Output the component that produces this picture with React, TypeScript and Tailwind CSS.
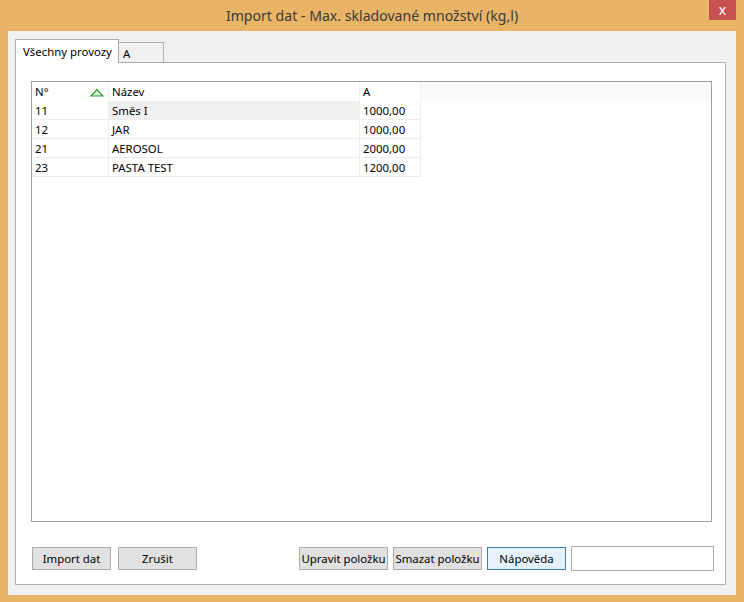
import React from "react";

type Row = { id: string; name: string; a: string };

const rows: Row[] = [
  { id: "11", name: "Směs I", a: "1000,00" },
  { id: "12", name: "JAR", a: "1000,00" },
  { id: "21", name: "AEROSOL", a: "2000,00" },
  { id: "23", name: "PASTA TEST", a: "1200,00" },
];

function SortArrow() {
  return (
    <svg width="14" height="9" viewBox="0 0 14 9">
      <path d="M1 8 L7 1.5 L13 8 Z" fill="#d2f5cf" stroke="#2f9a3a" strokeWidth="1.2" />
    </svg>
  );
}

function Btn({ label, w, focus }: { label: string; w: string; focus?: boolean }) {
  return (
    <button
      type="button"
      className={`h-[23px] ${w} whitespace-nowrap border px-0 text-[11.4px] text-black ${
        focus ? "border-[#3c7fb1] bg-[#e5f1fb]" : "border-[#adadad] bg-[#e1e1e1]"
      }`}
    >
      {label}
    </button>
  );
}

export default function App() {
  return (
    <div
      className="relative flex h-[602px] w-[744px] flex-col bg-[#eab466] text-[11.4px] text-black"
      style={{ fontFamily: '"Noto Sans", "Open Sans", sans-serif' }}
    >
      {/* title bar */}
      <div className="flex h-[31px] shrink-0 items-center justify-center text-[14.1px] text-[#3a3a3a]">
        Import dat - Max. skladované množství (kg,l)
      </div>
      <div className="absolute right-[8px] top-0 flex h-[20px] w-[27px] items-center justify-center bg-[#c75050] pb-[2px] text-[14px] text-white">
        x
      </div>

      {/* client area */}
      <div className="mx-[8px] flex h-[564px] flex-col bg-[#f0f0f0] pl-[7px] pr-[10px] pt-[8px]">
        {/* tabs */}
        <div className="flex h-[23px] items-end">
          <div className="relative z-10 -mb-px flex h-[24px] w-[104px] items-center border border-b-0 border-[#adadad] bg-white pl-[7px]">
            Všechny provozy
          </div>
          <div className="flex h-[20px] w-[45px] items-center border border-b-0 border-l-0 border-[#adadad] bg-[#f0f0f0] pl-[4px] pt-[2px]">
            A
          </div>
        </div>

        {/* tab page */}
        <div className="flex h-[523px] flex-col border border-[#adadad] bg-white pl-[15px] pr-[13px] pt-[18px]">
          <div className="h-[441px] border border-[#a0a0a0] bg-white">
            <div className="flex h-[19px] bg-[#f9f9f9]">
              <div className="flex w-[76px] items-center justify-between bg-white pl-[3px] pr-[4px] pt-[1px]">
                <span>N°</span>
                <SortArrow />
              </div>
              <div className="flex w-[251px] items-center border-l border-[#f0f0f0] bg-white pl-[3px] pt-[1px]">
                Název
              </div>
              <div className="flex w-[61px] items-center border-l border-[#f0f0f0] bg-white pl-[3px] pt-[1px]">
                A
              </div>
              <div className="flex-1 border-l border-[#f0f0f0]" />
            </div>
            {rows.map((r, i) => (
              <div key={r.id} className="flex h-[19px] w-[389px] border-b border-[#ececec]">
                <div className="flex w-[76px] items-center pl-[3px] pt-[2px]">{r.id}</div>
                <div
                  className={`flex w-[251px] items-center border-l border-[#ececec] pl-[3px] pt-[2px] ${
                    i === 0 ? "bg-[#f0f0f0]" : ""
                  }`}
                >
                  {r.name}
                </div>
                <div className="flex w-[62px] items-center border-x border-[#ececec] pl-[3px] pt-[2px]">{r.a}</div>
              </div>
            ))}
          </div>

          <div className="mt-[24px] flex items-center pl-[1px]">
            <div className="flex gap-[7px]">
              <Btn label="Import dat" w="w-[79px]" />
              <Btn label="Zrušit" w="w-[79px]" />
            </div>
            <div className="ml-[102px] flex items-center gap-[5px]">
              <Btn label="Upravit položku" w="w-[89px]" />
              <Btn label="Smazat položku" w="w-[89px]" />
              <Btn label="Nápověda" w="w-[79px]" focus />
              <div className="h-[25px] w-[143px] border border-[#adadad] bg-white" />
            </div>
          </div>
        </div>
      </div>
    </div>
  );
}
